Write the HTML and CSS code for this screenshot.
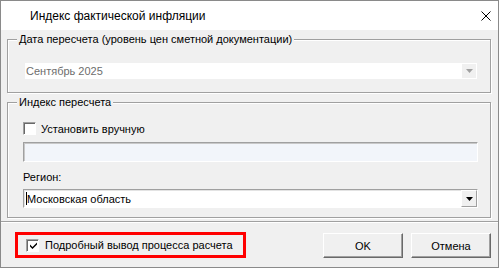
FILE: index.html
```html
<!DOCTYPE html>
<html lang="ru">
<head>
<meta charset="utf-8">
<title>Индекс фактической инфляции</title>
<link rel="stylesheet" href="styles.css">
</head>
<body>
<div class="window">
  <div class="titlebar">
    <span class="title">Индекс фактической инфляции</span>
    <svg class="close" width="10" height="10" viewBox="0 0 10 10"><path d="M0.5 0.5 L9.5 9.5 M9.5 0.5 L0.5 9.5" stroke="#000" stroke-width="1" fill="none"/></svg>
  </div>
  <div class="client">
    <div class="groups">
      <fieldset class="group">
        <legend>Дата пересчета (уровень цен сметной документации)</legend>
        <div class="gbody g1">
          <div class="combo disabled">
            <span class="val">Сентябрь 2025</span>
            <span class="dbtn"><svg width="7" height="4" viewBox="0 0 7 4"><path d="M0 0 H7 L3.5 4 Z" fill="#a0a0a0"/></svg></span>
          </div>
        </div>
      </fieldset>
      <fieldset class="group g2wrap">
        <legend>Индекс пересчета</legend>
        <div class="gbody g2">
          <label class="check"><span class="box"></span><span>Установить вручную</span></label>
          <div class="edit"></div>
          <div class="lbl">Регион:</div>
          <div class="combo sunken">
            <span class="caret"></span>
            <span class="val">Московская область</span>
            <span class="dbtn raised"><svg width="7" height="4" viewBox="0 0 7 4"><path d="M0 0 H7 L3.5 4 Z" fill="#000"/></svg></span>
          </div>
        </div>
      </fieldset>
    </div>
    <div class="footer">
      <label class="check hl"><span class="box"><svg width="9" height="9" viewBox="0 0 9 9"><path d="M1 3.5 L3.5 6 L8 1.5 V3.5 L3.5 8 L1 5.5 Z" fill="#000"/></svg></span><span>Подробный вывод процесса расчета</span></label>
      <div class="buttons">
        <button class="btn">OK</button>
        <button class="btn">Отмена</button>
      </div>
    </div>
  </div>
</div>
</body>
</html>
```
FILE: styles.css
```css
html, body {
  margin: 0;
  padding: 0;
  background: #ffffff;
}
body {
  font-family: "Liberation Sans", Arial, sans-serif;
  font-size: 11px;
  color: #000;
}
.window {
  width: 499px;
  height: 268px;
  box-sizing: border-box;
  border: 1px solid #8a8a8a;
  display: flex;
  flex-direction: column;
  background: #f0f0f0;
}
.titlebar {
  height: 29px;
  flex: none;
  background: #fff;
  display: flex;
  align-items: center;
  padding-left: 29px;
  padding-right: 7px;
}
.title {
  font-size: 12px;
  color: #000;
}
.close {
  margin-left: auto;
  display: block;
}
.client {
  flex: 1;
  display: flex;
  flex-direction: column;
}
.groups {
  padding: 0 7px 0 6px;
}
.group {
  margin: 3px 0 0;
  padding: 0;
  min-width: 0;
  border: 1px solid #a0a0a0;
  box-shadow: 1px 1px 0 #fff, inset 1px 1px 0 #fff;
}
.group legend {
  margin-left: 9px;
  padding: 0 2px;
  line-height: 13px;
  background: #f0f0f0;
}
.g1 {
  padding: 17px 13px 13px 17px;
}
.g2 {
  padding: 13px 12px 9px 15px;
}
.combo {
  display: flex;
  align-items: center;
  background: #fff;
  box-sizing: border-box;
}
.combo.disabled {
  height: 16px;
}
.combo.disabled .val {
  color: #6d6d6d;
  padding-left: 1px;
}
.combo .dbtn {
  margin-left: auto;
  display: flex;
  align-items: center;
  justify-content: center;
  box-sizing: border-box;
}
.combo.disabled .dbtn {
  width: 14px;
  height: 14px;
  margin-right: 1px;
  background: #f0f0f0;
}
.combo.sunken {
  height: 19px;
  border: 1px solid;
  border-color: #a0a0a0 #fff #fff #a0a0a0;
  box-shadow: inset 1px 1px 0 #e3e3e3;
  padding-left: 2px;
}
.caret {
  width: 1px;
  height: 13px;
  background: #000;
  margin-right: 0;
}
.combo.raised .dbtn, .combo .dbtn.raised {
  width: 16px;
  height: 17px;
  background: #f0f0f0;
  border: 1px solid;
  border-color: #fff #a0a0a0 #a0a0a0 #fff;
}
.check {
  display: flex;
  align-items: center;
  height: 13px;
  gap: 5px;
}
.box {
  width: 13px;
  height: 13px;
  box-sizing: border-box;
  background: #fff;
  border: 1px solid;
  border-color: #a0a0a0 #fff #fff #a0a0a0;
  box-shadow: inset 1px 1px 0 #696969;
  display: flex;
  align-items: center;
  justify-content: center;
  padding: 1px 0 0 1px;
}
.edit {
  margin-top: 7px;
  height: 20px;
  box-sizing: border-box;
  background: #f2f5fa;
  border: 1px solid;
  border-color: #a0a0a0 #fff #fff #a0a0a0;
  box-shadow: inset 1px 1px 0 #c8c8c8;
}
.lbl {
  margin-top: 9px;
  line-height: 13px;
}
.g2 .combo {
  margin-top: 5px;
}
.footer {
  margin-top: 3px;
  flex: 1;
  border-top: 1px solid #a0a0a0;
  box-shadow: inset 0 1px 0 #fff;
  padding: 10px 7px 0 14px;
  display: flex;
  align-items: flex-start;
}
.hl {
  border: 3px solid #ff0000;
  box-sizing: border-box;
  width: 231px;
  height: 26px;
  padding-left: 8px;
  gap: 6px;
}
.buttons {
  margin-left: auto;
  margin-top: 1px;
  display: flex;
  gap: 8px;
}
.btn {
  width: 80px;
  height: 25px;
  box-sizing: border-box;
  font-family: "Liberation Sans", Arial, sans-serif;
  font-size: 11px;
  color: #000;
  background: #f0f0f0;
  border: 1px solid;
  border-color: #fff #696969 #696969 #fff;
  box-shadow: inset -1px -1px 0 #a0a0a0;
  padding: 0;
}
```
